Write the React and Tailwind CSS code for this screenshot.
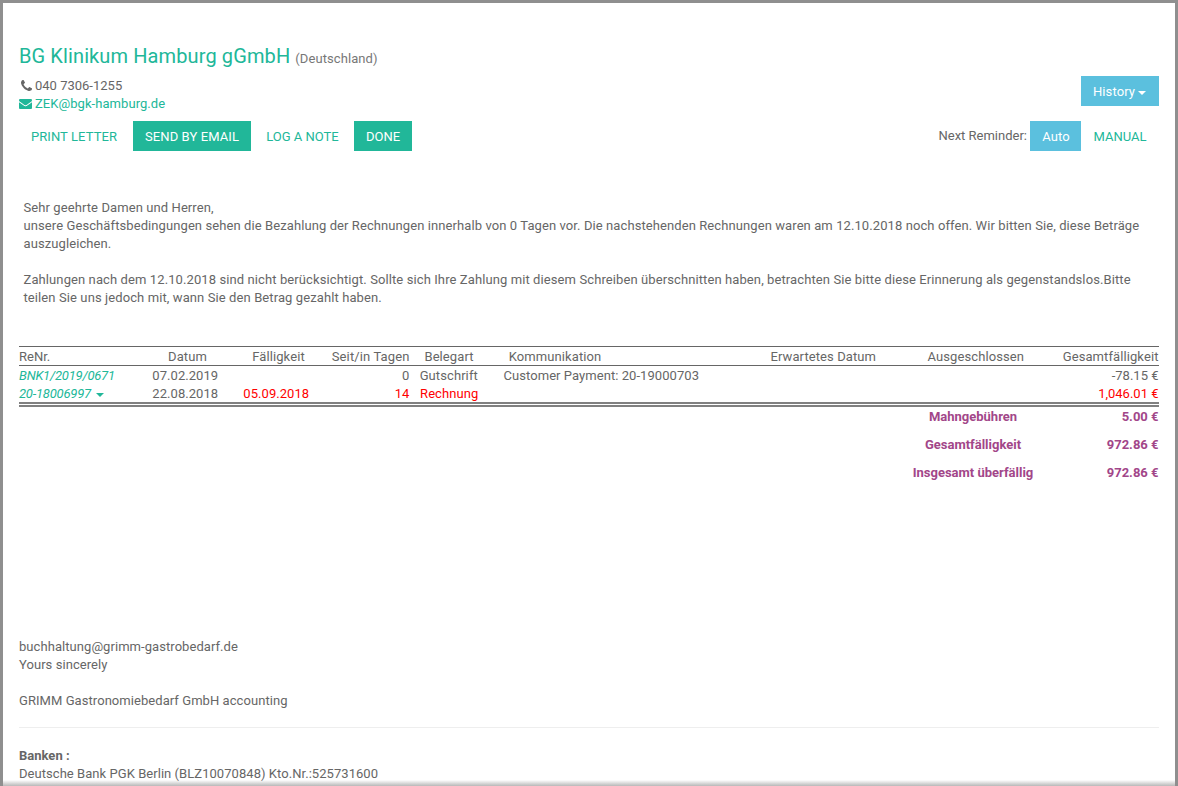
const Caret = ({ className = "" }) => (
  <span className={`inline-block border-x-4 border-t-4 border-x-transparent border-t-current align-middle ${className}`} />
);

export default function App() {
  return (
    <div className="relative flex h-[786px] w-[1178px] flex-col overflow-hidden border-x-[3px] border-t-[3px] border-[#8f8f8f] bg-white pl-4 pr-4 font-['Roboto',sans-serif] text-[13px] leading-[18px] tracking-[0.09px] text-[#666666]">
      <header className="h-[196px] shrink-0 pt-10">
        <h1 className="h-[33px] text-[20px] leading-[26px] tracking-[0.11px] text-[#21b799]">
          BG Klinikum Hamburg gGmbH <span className="text-[13px] tracking-[0.08px] text-[#777777]">(Deutschland)</span>
        </h1>
        <div className="flex h-[45px] justify-between">
          <div className="pt-px">
            <div className="flex h-[18px] items-center tracking-normal">
              <svg viewBox="0 0 1408 1408" className="mr-[3px] mb-px ml-[2px] h-[11px] w-[11px]" fill="currentColor">
                <path d="M1408 1112q0 27-10 70.500t-21 68.500q-21 50-122 106-94 51-186 51-27 0-53-3.500t-57.500-12.500-47-14.500-55.500-20.500-49-18q-98-35-175-83-127-79-264-216t-216-264q-48-77-83-175-3-9-18-49t-20.500-55.500-14.500-47-12.500-57.500-3.500-53q0-92 51-186 56-101 106-122 25-11 68.500-21t70.500-10q14 0 21 3 18 6 53 76 11 19 30 54t35 63.500 31 53.500q3 4 17.500 25t21.500 35.500 7 28.500q0 20-28.500 50t-62 55-62 53-28.500 46q0 9 5 22.500t8.500 20.500 14 24 11.500 19q76 137 174 235t235 174q2 1 19 11.500t24 14 20.500 8.500 22.500 5q18 0 46-28.500t53-62 55-62 50-28.500q14 0 28.500 7t35.500 21.500 25 17.500q25 15 53.500 31t63.500 35 54 30q70 35 76 53 3 7 3 21z" />
              </svg>
              040 7306-1255
            </div>
            <div className="flex h-[18px] items-center tracking-[0.06px] text-[#21b799]">
              <svg viewBox="0 0 1792 1408" className="mr-[3px] h-[10px] w-[13px]" preserveAspectRatio="none" fill="currentColor">
                <path d="M1792 454v794q0 66-47 113t-113 47h-1472q-66 0-113-47t-47-113v-794q44 49 101 87 362 246 497 345 57 42 92.500 65.500t94.500 48 110 24.500h2q51 0 110-24.500t94.500-48 92.500-65.500q170-123 498-345 57-39 100-87zm0-294q0 79-49 151t-122 123q-376 261-468 325-10 7-42.500 30.500t-54 38-52 32.500-57.500 27-50 9h-2q-23 0-50-9t-57.500-27-52-32.500-54-38-42.500-30.500q-91-64-262-182.500t-205-142.500q-62-42-117-115.500t-55-136.500q0-78 41.500-130t118.500-52h1472q65 0 112.500 47t47.500 113z" />
              </svg>
              ZEK@bgk-hamburg.de
            </div>
          </div>
          <button className="flex h-[30px] w-[78px] items-center justify-center bg-[#5bc0de] pt-[2px] pr-px text-white">
            History<Caret className="ml-[3px] mt-[2px]" />
          </button>
        </div>
        <div className="flex h-[30px] justify-between">
          <div className="flex">
            <button className="mr-[3px] w-[111px] pt-[2px] pr-px text-[#21b799]">PRINT LETTER</button>
            <button className="mr-[3px] w-[118px] bg-[#21b799] pt-[2px] text-white">SEND BY EMAIL</button>
            <button className="mr-[3px] w-[97px] pt-[2px] tracking-normal text-[#21b799]">LOG A NOTE</button>
            <button className="w-[58px] bg-[#21b799] pt-[2px] tracking-normal text-white">DONE</button>
          </div>
          <div className="flex">
            <span className="mr-[3px] pt-[6px] tracking-normal">Next Reminder:</span>
            <button className="w-[51px] bg-[#5bc0de] pt-[2px] pl-px text-white">Auto</button>
            <button className="w-[78px] pt-[2px] tracking-normal text-[#21b799]">MANUAL</button>
          </div>
        </div>
      </header>

      <section className="h-[147px] shrink-0 whitespace-nowrap pl-[4.5px]">
        <p>Sehr geehrte Damen und Herren,</p>
        <p>unsere Geschäftsbedingungen sehen die Bezahlung der Rechnungen innerhalb von 0 Tagen vor. Die nachstehenden Rechnungen waren am 12.10.2018 noch offen. Wir bitten Sie, diese Beträge</p>
        <p>auszugleichen.</p>
        <p className="mt-[18px] tracking-[0.1px]">Zahlungen nach dem 12.10.2018 sind nicht berücksichtigt. Sollte sich Ihre Zahlung mit diesem Schreiben überschnitten haben, betrachten Sie bitte diese Erinnerung als gegenstandslos.Bitte</p>
        <p className="tracking-[0.1px]">teilen Sie uns jedoch mit, wann Sie den Betrag gezahlt haben.</p>
      </section>

      <table className="w-[1140px] shrink-0 table-fixed border-separate border-spacing-0 whitespace-nowrap leading-4">
        <colgroup>
          <col className="w-[121px]" />
          <col className="w-[95px]" />
          <col className="w-[88px]" />
          <col className="w-[87px]" />
          <col className="w-[79px]" />
          <col className="w-[132px]" />
          <col className="w-[404px]" />
          <col className="w-[134px]" />
        </colgroup>
        <thead>
          <tr className="h-5 text-center [&>td]:border-y [&>td]:border-[#666666] [&>td]:p-0 [&>td]:pt-[2px]">
            <td className="text-left tracking-normal">ReNr.</td>
            <td>Datum</td>
            <td className="pr-px!">Fälligkeit</td>
            <td className="pr-[0.5px]! text-right tracking-[0.12px]">Seit/in Tagen</td>
            <td className="pr-px!">Belegart</td>
            <td>Kommunikation</td>
            <td>
              <div className="flex justify-between pl-[149.5px] pr-[1px]">
                <span>Erwartetes Datum</span>
                <span>Ausgeschlossen</span>
              </div>
            </td>
            <td className="pr-[0.5px]! text-right">Gesamtfälligkeit</td>
          </tr>
        </thead>
        <tbody>
          <tr className="h-[18px] text-center [&>td]:p-0 [&>td]:pt-[2px]">
            <td className="text-left italic tracking-[-0.22px] text-[#21b799]">BNK1/2019/0671</td>
            <td className="pr-[4.5px]! tracking-[0.05px]">07.02.2019</td>
            <td />
            <td className="pr-[0.5px]! text-right">0</td>
            <td className="pr-[1.5px]!">Gutschrift</td>
            <td className="pl-[14.5px]! text-left tracking-[0.06px]">Customer Payment: 20-19000703</td>
            <td />
            <td className="pr-[0.5px]! text-right tracking-normal">-78.15 €</td>
          </tr>
          <tr className="text-center [&>td]:h-[23px] [&>td]:border-b-[5px] [&>td]:border-double [&>td]:border-[#808080] [&>td]:p-0 [&>td]:pt-[2px]">
            <td className="text-left italic tracking-[-0.22px] text-[#21b799]">20-18006997<Caret className="ml-[5px]" /></td>
            <td className="pr-[4.5px]! tracking-[0.05px]">22.08.2018</td>
            <td className="pr-[5.5px]! tracking-[0.05px] text-[#ff0000]">05.09.2018</td>
            <td className="pr-[0.5px]! text-right text-[#ff0000]">14</td>
            <td className="pr-[0.5px]! text-[#ff0000]">Rechnung</td>
            <td />
            <td />
            <td className="pr-[0.5px]! text-right tracking-normal text-[#ff0000]">1,046.01 €</td>
          </tr>
        </tbody>
      </table>

      <section className="ml-auto flex h-[231px] w-[280px] shrink-0 flex-col gap-[10px] pt-px font-bold tracking-normal text-[#a24689]">
        <div className="flex justify-between pr-[0.5px]"><span className="w-[188px] text-center">Mahngebühren</span><span>5.00 €</span></div>
        <div className="flex justify-between pr-[0.5px]"><span className="w-[188px] text-center">Gesamtfälligkeit</span><span>972.86 €</span></div>
        <div className="flex justify-between pr-[0.5px]"><span className="w-[188px] text-center">Insgesamt überfällig</span><span>972.86 €</span></div>
      </section>

      <footer className="w-[1140px] shrink-0 tracking-[0.06px]">
        <p>buchhaltung@grimm-gastrobedarf.de</p>
        <p>Yours sincerely</p>
        <p className="mt-[18px]">GRIMM Gastronomiebedarf GmbH accounting</p>
        <hr className="mb-[19px] mt-[17px] border-[#eeeeee]" />
        <p className="font-bold tracking-normal">Banken :</p>
        <p className="tracking-[0.05px]">Deutsche Bank PGK Berlin (BLZ10070848) Kto.Nr.:525731600</p>
      </footer>
      <div className="absolute -inset-x-[3px] bottom-0 h-[6px] bg-linear-to-b from-transparent to-black/28" />
    </div>
  );
}
